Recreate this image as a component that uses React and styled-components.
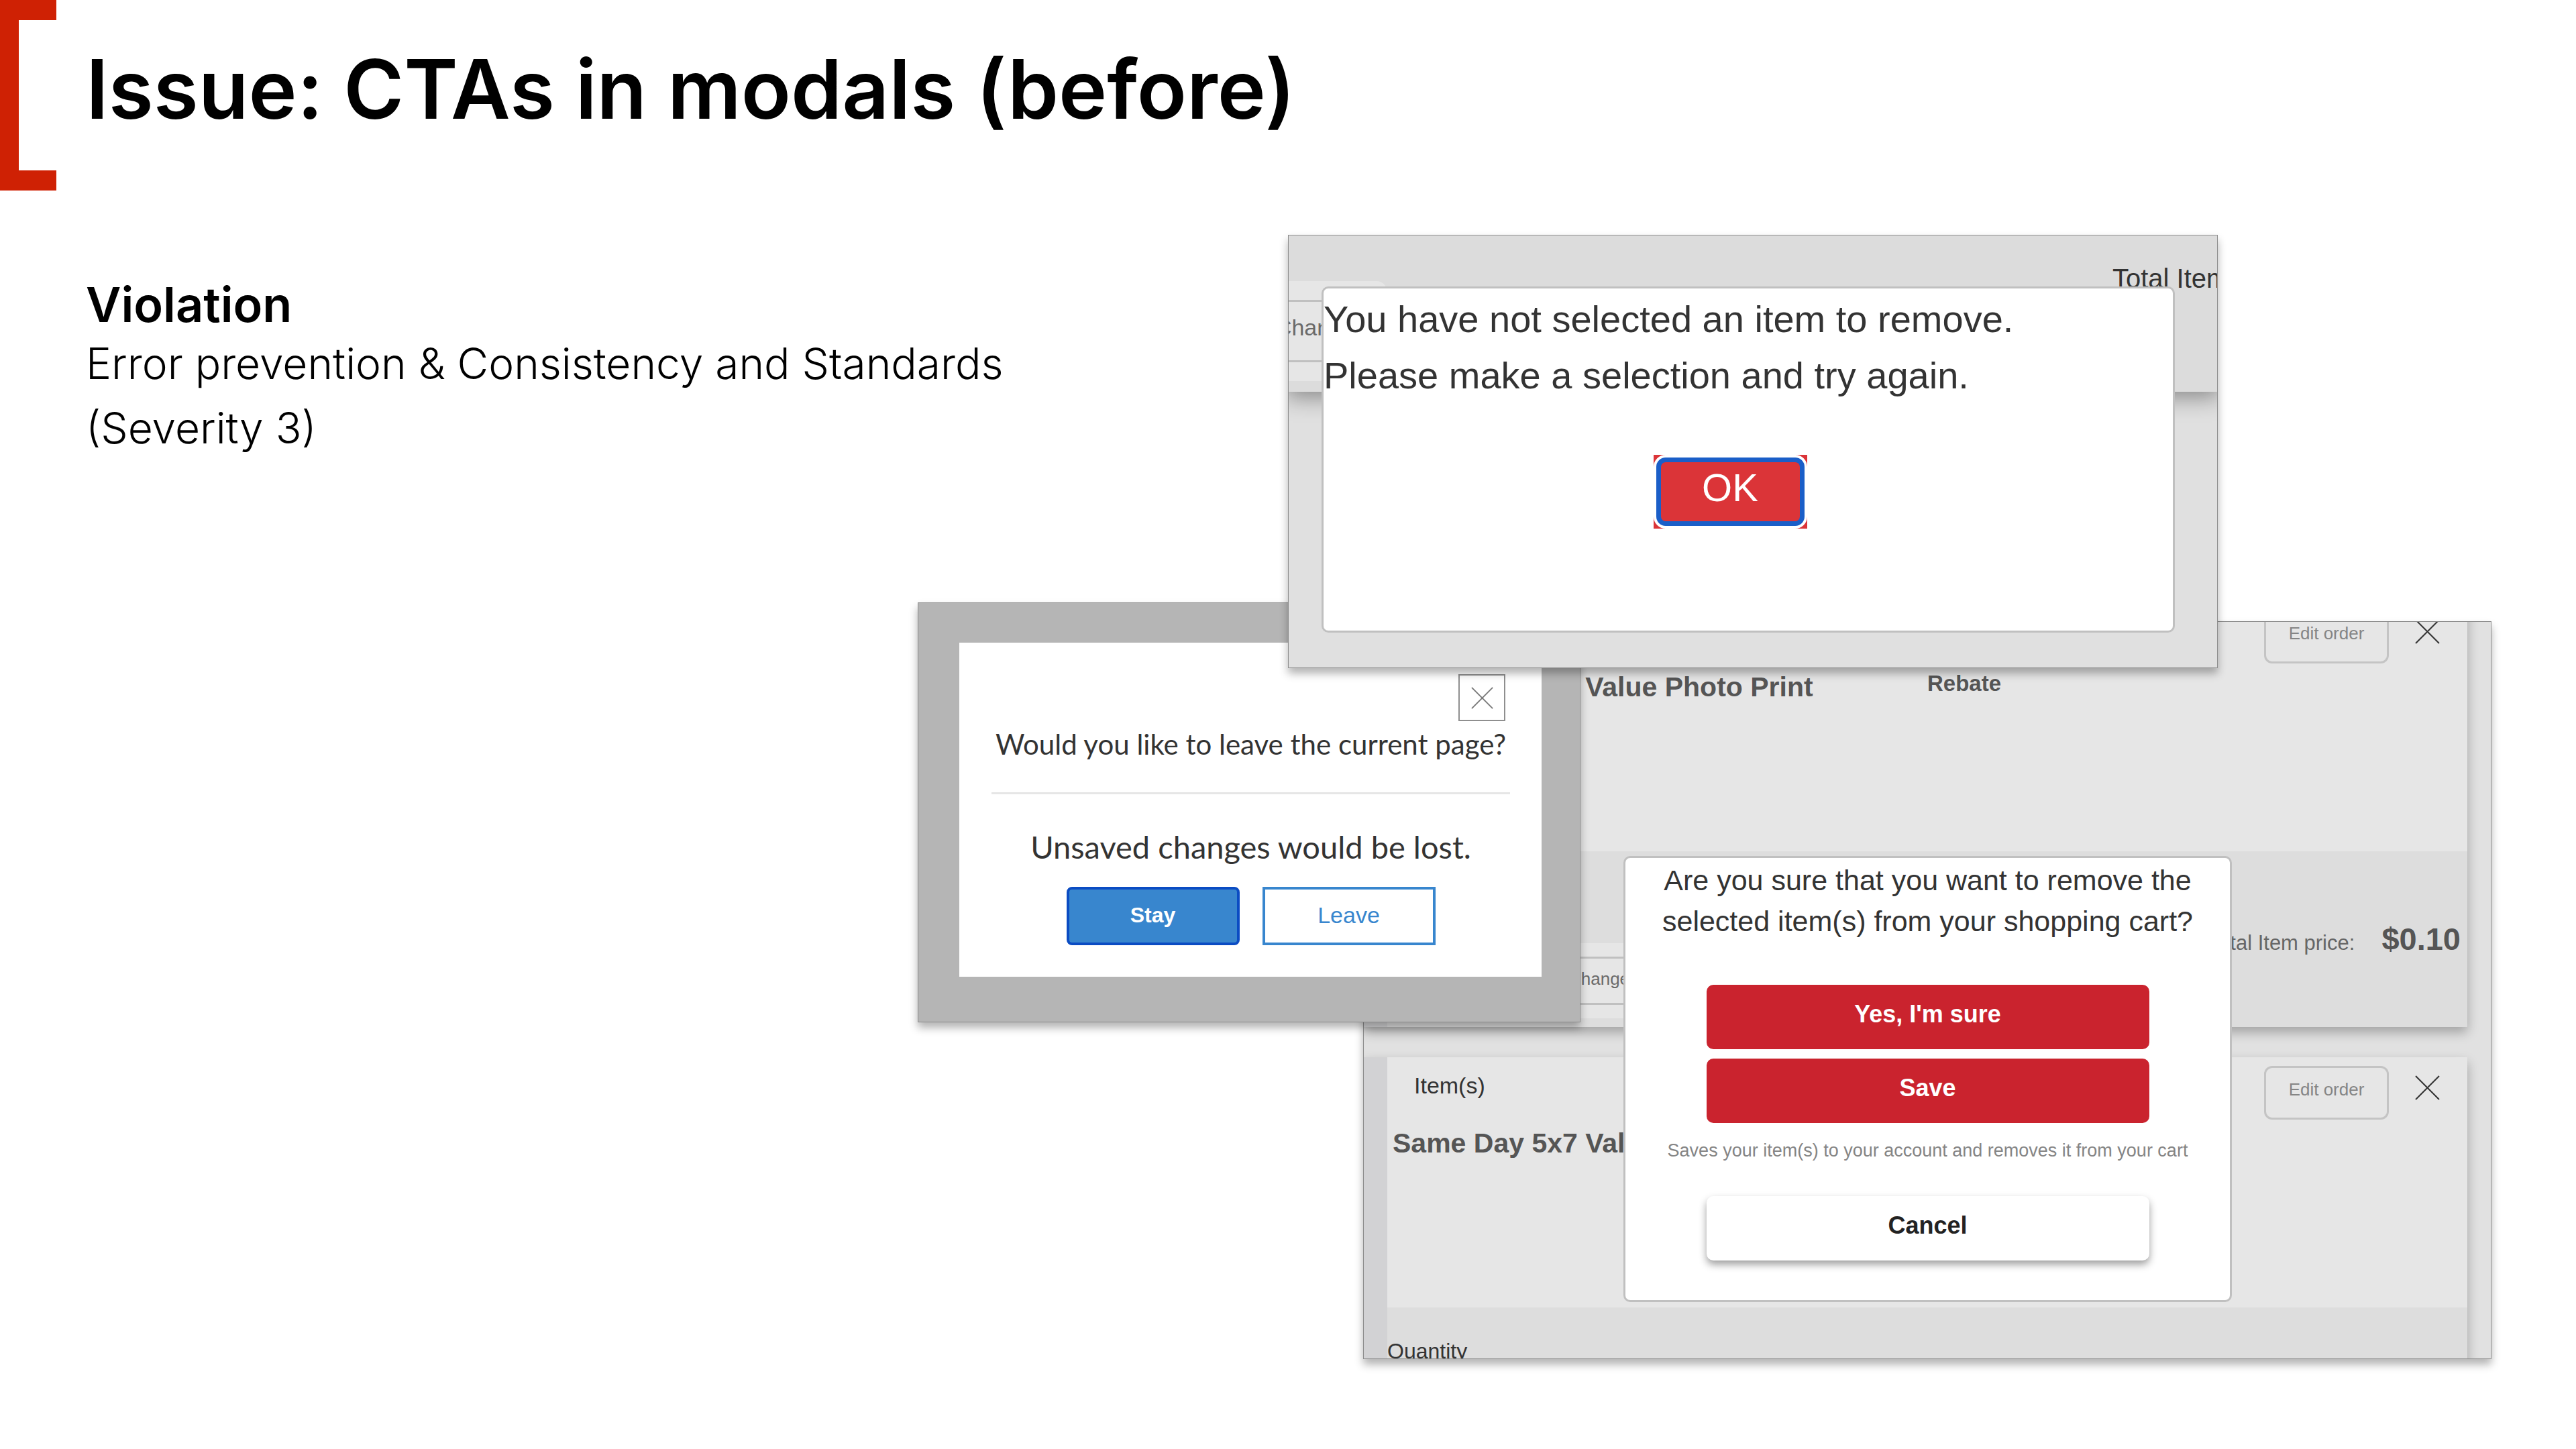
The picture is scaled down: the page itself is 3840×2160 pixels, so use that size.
import React from "react";
import styled, { createGlobalStyle, css } from "styled-components";

const GlobalStyle = createGlobalStyle`
  *, *::before, *::after { box-sizing: border-box; }
  body { margin: 0; background: #fff; color: #000; }
  h1, h2, h3, p { margin: 0; font-weight: inherit; }
  button { margin: 0; padding: 0; font: inherit; cursor: pointer; }
`;

const sans = '"Liberation Sans", Arial, sans-serif';
const slideFont = "Inter, sans-serif";
const dialogFont = "Lato, sans-serif";

/* ---------- slide ---------- */

const Slide = styled.main`
  font-family: ${slideFont};
  overflow: hidden;
`;

const SlideHeader = styled.header`
  display: flex;
  align-items: flex-start;
  gap: 44px;
`;

const Bracket = styled.div`
  flex: none;
  width: 84px;
  height: 284px;
  border: solid #cf2104;
  border-width: 30px 0 30px 28px;
`;

const SlideTitle = styled.h1`
  padding-top: 62px;
  font-size: 122px;
  font-weight: 600;
  line-height: 142px;
`;

const Board = styled.div`
  display: grid;
  grid-template-columns:
    minmax(0, 1368fr) minmax(0, 552fr) minmax(0, 112fr) minmax(0, 324fr)
    minmax(0, 950fr) minmax(0, 408fr) minmax(0, 126fr);
  grid-template-rows: 548px 28px 70px 528px 502px;
  padding: 66px 0 134px;
`;

const Finding = styled.section`
  grid-area: 1 / 1 / 2 / 3;
  padding: 64px 0 0 128px;
`;

const FindingTitle = styled.h2`
  font-size: 72px;
  font-weight: 600;
  line-height: 80px;
`;

const FindingText = styled.p`
  font-size: 64px;
  font-weight: 300;
  line-height: 96px;
`;

/* ---------- snapshots ---------- */

const Snapshot = styled.section`
  grid-area: ${(p) => p.$area};
  display: grid;
  grid-template: minmax(0, 1fr) / minmax(0, 1fr);
  overflow: hidden;
  border: 1px solid #8c8c8c;
  background: ${(p) => p.$fill};
  box-shadow: 0 8px 12px rgba(0, 0, 0, 0.3);
  font-family: ${sans};
  color: #333;

  > * { grid-area: 1 / 1; }
`;

const Backdrop = styled.div`
  min-width: 0;
  overflow: hidden;
`;

const Dialog = styled.div`
  display: flex;
  flex-direction: column;
  background: #fff;
`;

const RoundedDialog = styled(Dialog)`
  border: 3px solid #c0c0c0;
  border-radius: 10px;
`;

/* alert */

const AlertBand = styled.div`
  display: flex;
  justify-content: space-between;
  align-items: flex-start;
  height: 233px;
  background: #dcdcdc;
  box-shadow: 0 4px 32px 4px rgba(0, 0, 0, 0.4);
`;

const ChangePanel = styled.div`
  background: #e6e6e6;
  overflow: hidden;
  ${(p) =>
    p.$large
      ? css`
          width: 147px;
          margin-top: 68px;
          padding: 28px 0;
          border-radius: 0 16px 0 0;
        `
      : css`
          width: 320px;
          margin: 52px 0 0 233px;
          padding: 20px 0;
        `}
`;

const ChangeButton = styled.button`
  display: flex;
  align-items: center;
  width: 100%;
  border: 3px solid #c0c0c0;
  background: #e6e6e6;
  color: #6a6a6a;
  font-family: ${sans};
  white-space: nowrap;
  ${(p) =>
    p.$large
      ? css`
          justify-content: flex-end;
          height: 93px;
          padding: 0 48px 10px 0;
          border-width: 3px 0;
          font-size: 34px;
        `
      : css`
          height: 72px;
          padding: 0 0 6px 34px;
          font-size: 26px;
        `}
`;

const AlertTotal = styled.p`
  flex: 0 0 156px;
  min-width: 0;
  padding-top: 40px;
  font-size: 40px;
  line-height: 48px;
  white-space: nowrap;
`;

const AlertDialog = styled(RoundedDialog)`
  margin: 76px 63px 52px 49px;
  padding-top: 4px;
`;

const AlertText = styled.p`
  font-size: 56px;
  line-height: 84px;
`;

const AlertActions = styled.div`
  display: flex;
  justify-content: center;
  padding: 76px 54px 0 0;
`;

const OkButton = styled.button`
  width: 229px;
  height: 110px;
  border: 0;
  background: #db3438;
`;

const OkRing = styled.span`
  display: block;
  height: 100%;
  border: 4px solid #fff;
  border-radius: 18px;
  background: #fff;
`;

const OkFace = styled.span`
  display: flex;
  align-items: center;
  justify-content: center;
  height: 100%;
  padding-bottom: 14px;
  border: 7px solid #1a5ec8;
  border-radius: 14px;
  background: #db3438;
  color: #fff;
  font-family: ${sans};
  font-size: 58px;
`;

/* leave page */

const LeaveDialog = styled(Dialog)`
  align-items: center;
  margin: 59px 57px 67px 61px;
  padding: 47px 47px 0 48px;
  font-family: ${dialogFont};
`;

const BoxedClose = styled.button`
  display: flex;
  align-items: center;
  justify-content: center;
  align-self: flex-end;
  width: 70px;
  height: 70px;
  margin-right: 7px;
  border: 2px solid #8f8f8f;
  background: #fff;
  color: #777;
`;

const LeaveTitle = styled.h3`
  width: 100%;
  margin-top: 4px;
  padding-bottom: 42px;
  border-bottom: 3px solid #e6e6e6;
  font-size: 42px;
  line-height: 60px;
  text-align: center;
  white-space: nowrap;
`;

const LeaveText = styled.p`
  padding: 48px 0 30px;
  font-size: 47px;
  line-height: 60px;
`;

const LeaveActions = styled.div`
  display: flex;
  gap: 34px;
`;

const LeaveButton = styled.button`
  width: 258px;
  height: 87px;
  padding-bottom: 2px;
  border: 4px solid #3886ce;
  background: #fff;
  color: #3886ce;
  font-family: ${sans};
  font-size: 34px;
  ${(p) =>
    p.$primary &&
    css`
      border-color: #0b4cc3;
      border-radius: 8px;
      background: #3886ce;
      color: #fff;
      font-size: 32px;
      font-weight: 700;
    `}
`;

/* cart */

const CartPage = styled(Backdrop)`
  display: flex;
  flex-direction: column;
  gap: 45px;
  padding-right: 35px;
`;

const CartItem = styled.article`
  flex: none;
  border-left: 35px solid #d2d2d4;
  box-shadow: 0 8px 16px rgba(0, 0, 0, 0.28);

  &:first-child { margin-top: -31px; }
`;

const ItemTop = styled.div`
  display: grid;
  grid-template-columns: minmax(0, 1fr) minmax(0, 1fr);
  height: 373px;
  background: #e6e6e6;
`;

const ItemKind = styled.p`
  padding: 22px 0 0 40px;
  font-size: 34px;
  line-height: 40px;
`;

const ItemName = styled.h3`
  padding: 42px 0 0 8px;
  color: #555;
  font-size: 41px;
  font-weight: 700;
  line-height: 48px;
  white-space: nowrap;
`;

const ItemSide = styled.div`
  display: flex;
  align-items: flex-start;
`;

const Rebate = styled.p`
  padding-top: 103px;
  color: #555;
  font-size: 33px;
  font-weight: 700;
  line-height: 40px;
`;

const ItemTools = styled.div`
  display: flex;
  align-items: center;
  gap: 39px;
  margin-left: auto;
  padding: 13px 41px 0 0;
`;

const EditButton = styled.button`
  width: 186px;
  height: 80px;
  padding-bottom: 10px;
  border: 3px solid #c4c4c4;
  border-radius: 12px;
  background: #e6e6e6;
  color: #858585;
  font-family: ${sans};
  font-size: 26px;
`;

const PlainClose = styled.button`
  display: flex;
  padding: 0 0 16px;
  border: 0;
  background: none;
  color: #333;
`;

const ItemBottom = styled.div`
  display: flex;
  justify-content: space-between;
  align-items: flex-start;
  height: 262px;
  background: #ddd;
`;

const Quantity = styled.p`
  padding-top: 45px;
  font-size: 32px;
  line-height: 40px;
`;

const PriceLine = styled.p`
  display: flex;
  align-items: baseline;
  gap: 40px;
  padding: 101px 10px 0 0;
  color: #666;
  font-size: 31px;
  line-height: 60px;
`;

const Price = styled.strong`
  color: #555;
  font-size: 47px;
`;

const RemoveDialog = styled(RoundedDialog)`
  align-items: center;
  margin: 349px 386px 84px 387px;
  padding-top: 3px;
`;

const RemoveText = styled.h3`
  font-size: 43px;
  line-height: 61px;
  text-align: center;
  white-space: nowrap;
`;

const RemoveActions = styled.div`
  display: flex;
  flex-direction: column;
  gap: 14px;
  padding-top: 64px;
`;

const RemoveButton = styled.button`
  width: 660px;
  height: 96px;
  padding-bottom: 8px;
  border: 0;
  border-radius: 10px;
  background: #ca232e;
  color: #fff;
  font-family: ${sans};
  font-size: 36px;
  font-weight: 700;
  ${(p) =>
    p.$quiet &&
    css`
      background: #fff;
      color: #222;
      box-shadow: 0 6px 12px rgba(0, 0, 0, 0.38);
    `}
`;

const RemoveHint = styled.p`
  padding: 21px 0 48px;
  color: #858585;
  font-size: 27px;
  line-height: 40px;
  white-space: nowrap;
`;

function Cross({ size }) {
  return (
    <svg width={size} height={size} viewBox="0 0 36 36" fill="none" stroke="currentColor" strokeWidth="2" aria-hidden="true">
      <path d="M1 1 35 35M35 1 1 35" />
    </svg>
  );
}

function CartEntry({ rebate, price }) {
  return (
    <CartItem>
      <ItemTop>
        <div>
          <ItemKind>Item(s)</ItemKind>
          <ItemName>Same Day 5x7 Value Photo Print</ItemName>
        </div>
        <ItemSide>
          {rebate && <Rebate>Rebate</Rebate>}
          <ItemTools>
            <EditButton type="button">Edit order</EditButton>
            <PlainClose type="button" aria-label="Remove item">
              <Cross size={37} />
            </PlainClose>
          </ItemTools>
        </ItemSide>
      </ItemTop>
      <ItemBottom>
        <div>
          <Quantity>Quantity</Quantity>
          {price && (
            <ChangePanel>
              <ChangeButton type="button">Change</ChangeButton>
            </ChangePanel>
          )}
        </div>
        {price && (
          <PriceLine>
            Total Item price: <Price>{price}</Price>
          </PriceLine>
        )}
      </ItemBottom>
    </CartItem>
  );
}

function CartSnapshot() {
  return (
    <Snapshot $area="3 / 4 / 6 / 7" $fill="#e1e1e1">
      <CartPage>
        <CartEntry rebate price="$0.10" />
        <CartEntry />
      </CartPage>
      <RemoveDialog role="dialog" aria-label="Remove items">
        <RemoveText>
          Are you sure that you want to remove the
          <br />
          selected item(s) from your shopping cart?
        </RemoveText>
        <RemoveActions>
          <RemoveButton type="button">Yes, I'm sure</RemoveButton>
          <RemoveButton type="button">Save</RemoveButton>
        </RemoveActions>
        <RemoveHint>Saves your item(s) to your account and removes it from your cart</RemoveHint>
        <RemoveButton type="button" $quiet>Cancel</RemoveButton>
      </RemoveDialog>
    </Snapshot>
  );
}

function LeaveSnapshot() {
  return (
    <Snapshot $area="2 / 2 / 5 / 5" $fill="#b5b5b5">
      <LeaveDialog role="dialog" aria-label="Leave page">
        <BoxedClose type="button" aria-label="Close">
          <Cross size={33} />
        </BoxedClose>
        <LeaveTitle>Would you like to leave the current page?</LeaveTitle>
        <LeaveText>Unsaved changes would be lost.</LeaveText>
        <LeaveActions>
          <LeaveButton type="button" $primary>Stay</LeaveButton>
          <LeaveButton type="button">Leave</LeaveButton>
        </LeaveActions>
      </LeaveDialog>
    </Snapshot>
  );
}

function AlertSnapshot() {
  return (
    <Snapshot $area="1 / 3 / 4 / 6" $fill="#e0e0e0">
      <Backdrop>
        <AlertBand>
          <ChangePanel $large>
            <ChangeButton type="button" $large>Change</ChangeButton>
          </ChangePanel>
          <AlertTotal>Total Item</AlertTotal>
        </AlertBand>
      </Backdrop>
      <AlertDialog role="alertdialog" aria-label="Nothing selected">
        <AlertText>
          You have not selected an item to remove.
          <br />
          Please make a selection and try again.
        </AlertText>
        <AlertActions>
          <OkButton type="button">
            <OkRing>
              <OkFace>OK</OkFace>
            </OkRing>
          </OkButton>
        </AlertActions>
      </AlertDialog>
    </Snapshot>
  );
}

export default function App() {
  return (
    <Slide>
      <GlobalStyle />
      <SlideHeader>
        <Bracket />
        <SlideTitle>Issue: CTAs in modals (before)</SlideTitle>
      </SlideHeader>
      <Board>
        <Finding>
          <FindingTitle>Violation</FindingTitle>
          <FindingText>
            Error prevention &amp; Consistency and Standards
            <br />
            (Severity 3)
          </FindingText>
        </Finding>
        <CartSnapshot />
        <LeaveSnapshot />
        <AlertSnapshot />
      </Board>
    </Slide>
  );
}
